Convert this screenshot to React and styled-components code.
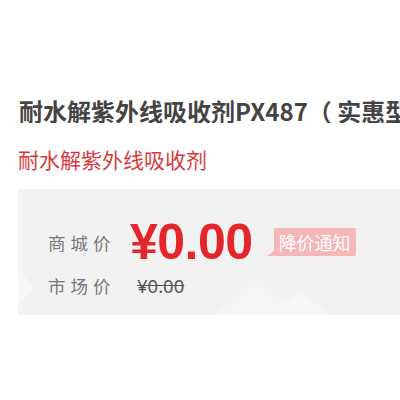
import styled, { createGlobalStyle } from 'styled-components';

const GlobalStyle = createGlobalStyle`
  html, body {
    margin: 0;
    padding: 0;
    background: #fff;
  }
  body {
    font-family: "Noto Sans CJK SC", "Noto Sans", sans-serif;
  }
`;

const Page = styled.div`
  width: 400px;
  height: 400px;
  overflow: hidden;
  padding: 99px 0 0 18px;
  box-sizing: border-box;
`;

const Title = styled.h1`
  margin: 0;
  font-size: 24px;
  line-height: 24px;
  font-weight: bold;
  color: #444;
  white-space: nowrap;
  overflow: hidden;
  padding-left: 1px;
`;

const SubTitle = styled.p`
  margin: 25px 0 0;
  font-size: 21px;
  line-height: 22px;
  color: #d63a3d;
  white-space: nowrap;
`;

const PriceBox = styled.div`
  position: relative;
  margin-top: 19px;
  height: 126px;
  background: #f2f2f2;
  padding: 33px 0 0 30px;
  box-sizing: border-box;
  overflow: hidden;
`;

const Deco = styled.svg`
  position: absolute;
  left: 0;
  bottom: 0;
  pointer-events: none;
`;

const Row = styled.div`
  position: relative;
  display: flex;
  align-items: center;
  height: ${(p) => p.$h}px;
`;

const Label = styled.span`
  width: 82px;
  font-size: 17.5px;
  letter-spacing: 5px;
  color: #777;
`;

const Price = styled.span`
  font-family: "Liberation Sans", Arial, sans-serif;
  font-weight: bold;
  font-size: 50px;
  line-height: 1;
  color: #e4262b;
  letter-spacing: -0.5px;
`;

const Notice = styled.span`
  position: relative;
  margin-left: 21px;
  height: 28px;
  padding: 0 5px;
  display: inline-flex;
  align-items: center;
  background: #f5b7b7;
  color: #fff;
  font-size: 18px;
  border-radius: 2px;
  &::before {
    content: '';
    position: absolute;
    left: -7px;
    bottom: 0;
    border-style: solid;
    border-width: 0 0 6px 8px;
    border-color: transparent transparent #f5b7b7 transparent;
  }
`;

const OldPrice = styled.span`
  margin-left: 7px;
  font-family: "Noto Sans", sans-serif;
  font-size: 18.5px;
  color: #555;
  text-decoration: line-through;
`;

export default function App() {
  return (
    <>
      <GlobalStyle />
      <Page>
        <Title>耐水解紫外线吸收剂PX487（ 实惠型）</Title>
        <SubTitle>耐水解紫外线吸收剂</SubTitle>
        <PriceBox>
          <Deco width="382" height="60" viewBox="0 0 382 60">
            <polygon points="0,14 16,32 0,50" fill="#f7f7f7" />
            <polygon points="196,60 238,22 282,60" fill="#f5f5f5" />
            <polygon points="252,60 282,36 312,60" fill="#f6f6f6" />
          </Deco>
          <Row $h={40}>
            <Label>商城价</Label>
            <Price>¥0.00</Price>
            <Notice>降价通知</Notice>
          </Row>
          <Row $h={46}>
            <Label>市场价</Label>
            <OldPrice>¥0.00</OldPrice>
          </Row>
        </PriceBox>
      </Page>
    </>
  );
}
